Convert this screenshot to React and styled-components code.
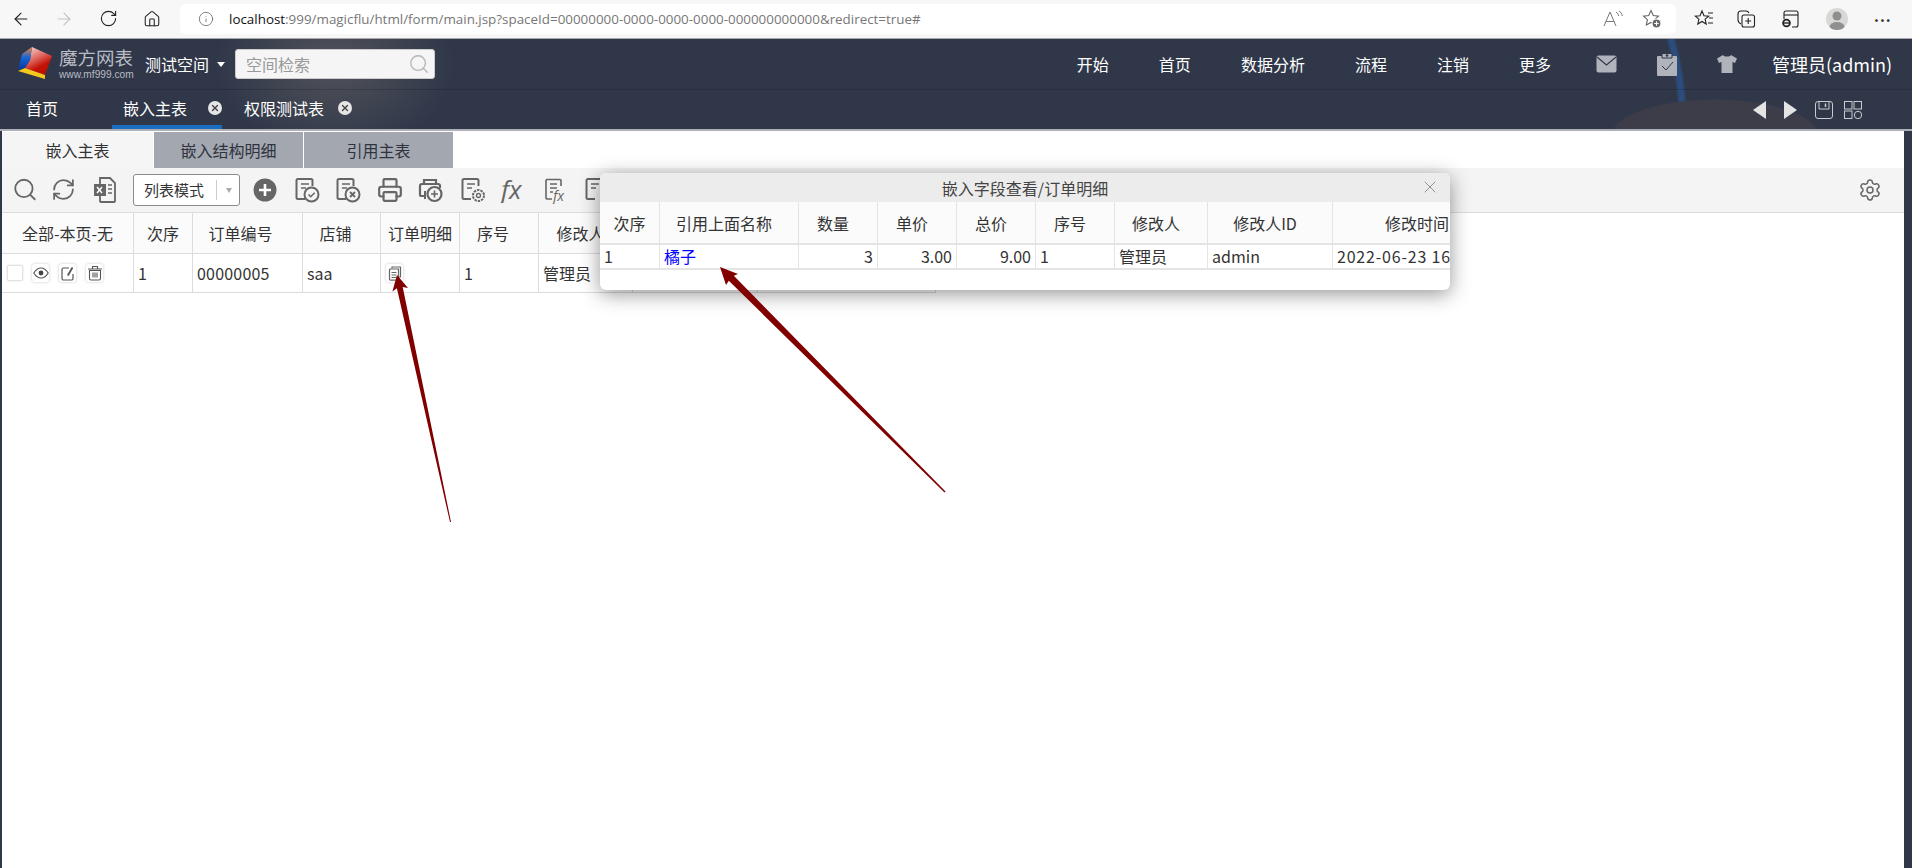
import styled, { createGlobalStyle } from 'styled-components';
import {
  ArrowLeft,
  ArrowRight,
  RotateCw,
  House,
  Info,
  Search,
  RefreshCw,
  Printer,
  Settings,
  X,
} from 'lucide-react';

const GlobalStyle = createGlobalStyle`
  html, body {
    margin: 0;
    padding: 0;
    height: 100%;
    background: #fff;
    font-family: "Noto Sans CJK SC", "Noto Sans", sans-serif;
    color: #333;
  }
  * {
    box-sizing: border-box;
  }
`;

const Page = styled.div`
  position: relative;
  width: 1912px;
  height: 868px;
  overflow: hidden;
  display: flex;
  flex-direction: column;
`;

/* browser chrome */
const BrowserBar = styled.div`
  height: 39px;
  flex: none;
  display: flex;
  align-items: center;
  padding-bottom: 1px;
  background: #f7f7f7;
  border-bottom: 1px solid #a9a9a9;
  color: #222;
`;

const BrowserBtn = styled.span`
  width: ${(p) => p.$w || 44}px;
  display: flex;
  justify-content: center;
  color: ${(p) => (p.$off ? '#c4c4c4' : '#222')};
`;

const AddressBar = styled.div`
  width: 1496px;
  height: 30px;
  margin-left: 6px;
  margin-right: 6px;
  padding: 0 14px 0 18px;
  background: #fff;
  border-radius: 6px;
  display: flex;
  align-items: center;
  font-family: "Open Sans", sans-serif;
  font-size: 13.4px;
  color: #777;
`;

const Url = styled.span`
  margin-left: 15px;
  flex: 1;
  white-space: nowrap;
  b {
    font-weight: 400;
    color: #111;
  }
`;

const AddrTools = styled.div`
  display: flex;
  align-items: center;
  gap: 17px;
  color: #666;
`;

const BrowserTools = styled.div`
  display: flex;
  align-items: center;
  flex: 1;
  gap: 23px;
  padding-left: 12px;
`;

const Avatar = styled.span`
  width: 22px;
  height: 22px;
  border-radius: 50%;
  background: #d8d8d6;
  overflow: hidden;
  display: block;
  margin-left: 3px;
`;

const Dots = styled.span`
  font-size: 15px;
  font-weight: 700;
  line-height: 1;
  letter-spacing: 1px;
  margin-left: 3px;
  margin-top: -6px;
  color: #333;
`;

/* app header */
const AppHeader = styled.header`
  flex: none;
  color: #fff;
  background:
    radial-gradient(ellipse 105px 37px at 1715px 97px, #3d3c49 97%, transparent 100%),
    radial-gradient(circle at -257.5px 83px, transparent 295px, #2c4c7c 298px, #2c4c7c 302px, transparent 305px) 1640px 0 / 80px 66px no-repeat,
    radial-gradient(ellipse 120px 90px at 335px 25px, rgba(128, 120, 112, 0.42), transparent 100%),
    #2f3749;
`;

const TopRow = styled.div`
  height: 51px;
  display: flex;
  align-items: center;
  padding: 0 20px 0 18px;
  border-bottom: 1px solid rgba(0, 0, 0, 0.16);
`;

const Logo = styled.div`
  display: flex;
  align-items: center;
  width: 127px;
  gap: 5px;
`;

const LogoText = styled.div`
  color: #b9bcc3;
  line-height: 1;
  strong {
    display: block;
    font-weight: 400;
    font-size: 18.5px;
    white-space: nowrap;
  }
  small {
    display: block;
    font-family: "Liberation Sans", sans-serif;
    font-size: 10.2px;
    margin-top: 4px;
    white-space: nowrap;
  }
`;

const SpaceName = styled.span`
  font-size: 16px;
  white-space: nowrap;
`;

const CaretDown = styled.span`
  width: 0;
  height: 0;
  margin: 0 8px;
  border-left: 4px solid transparent;
  border-right: 4px solid transparent;
  border-top: 5px solid #fff;
`;

const SearchBox = styled.div`
  width: 200px;
  height: 30px;
  margin-left: 2px;
  padding: 0 4px 0 10px;
  background: #f5f5f5;
  border-radius: 3px;
  border: 1px solid #ccc;
  display: flex;
  align-items: center;
  justify-content: space-between;
  font-size: 16px;
  color: #999;
`;

const NavList = styled.nav`
  margin-left: auto;
  display: flex;
  align-items: center;
  gap: 50px;
  font-size: 16px;
  white-space: nowrap;
`;

const NavIcons = styled.div`
  display: flex;
  align-items: center;
  gap: 40px;
  margin-left: -5px;
`;

const UserName = styled.span`
  font-size: 18px;
  margin-left: -15px;
`;

const TabRow = styled.div`
  height: 41px;
  display: flex;
  align-items: stretch;
  padding: 0 50px 0 26px;
  border-bottom: 2px solid #adb0b6;
`;

const HeadTab = styled.div`
  display: flex;
  align-items: center;
  gap: ${(p) => p.$gap || 0}px;
  font-size: 16px;
  white-space: nowrap;
  padding-left: ${(p) => p.$pad || 0}px;
  width: ${(p) => (p.$w ? `${p.$w}px` : 'auto')};
  border-bottom: 4px solid ${(p) => (p.$active ? '#1b6dc1' : 'transparent')};
`;

const CloseDot = styled.span`
  width: 14px;
  height: 14px;
  border-radius: 50%;
  background: #e6e6e6;
  color: #444;
  display: flex;
  align-items: center;
  justify-content: center;
`;

const WinTools = styled.div`
  margin-left: auto;
  display: flex;
  align-items: center;
  gap: 14px;
`;

const Triangle = styled.span`
  width: 0;
  height: 0;
  margin-right: 4px;
  border-top: 9px solid transparent;
  border-bottom: 9px solid transparent;
  ${(p) => (p.$left ? 'border-right: 13px solid #e4e4e4;' : 'border-left: 13px solid #e4e4e4;')}
`;

const FloppySlot = styled.span`
  display: flex;
  margin-right: -3px;
`;

/* content */
const Content = styled.main`
  position: relative;
  flex: 1;
  background: #fff;
  border-left: 2px solid #2f3749;
  border-right: 8px solid #2f3749;
  padding-top: 1px;
`;

const FormTabs = styled.div`
  display: flex;
  gap: 1px;
`;

const FormTab = styled.div`
  width: ${(p) => p.$w}px;
  height: 36px;
  display: flex;
  align-items: center;
  justify-content: center;
  font-size: 16px;
  background: ${(p) => (p.$active ? '#f5f5f5' : '#a3a7b0')};
  color: ${(p) => (p.$active ? '#333' : '#2f3340')};
`;

const Toolbar = styled.div`
  height: 45px;
  display: flex;
  align-items: center;
  padding: 0 22px 1px 10px;
  background: #f4f4f4;
  border-bottom: 1px solid #dcdcdc;
  color: #666;
`;

const ToolIcon = styled.span`
  width: ${(p) => p.$w || 41.5}px;
  flex: none;
  display: flex;
  justify-content: center;
`;

const ModeSelect = styled.div`
  position: relative;
  width: 107px;
  height: 32px;
  flex: none;
  margin: 0 3px 0 11px;
  padding-left: 10px;
  background: #fff;
  border: 1px solid #8c8c8c;
  border-radius: 3px;
  display: flex;
  align-items: center;
  font-size: 15px;
  white-space: nowrap;
  color: #333;
  &::before {
    content: '';
    position: absolute;
    right: 22px;
    top: 5px;
    height: 20px;
    border-left: 1px solid #ccc;
  }
  &::after {
    content: '';
    position: absolute;
    right: 7px;
    top: 13px;
    border-left: 3.5px solid transparent;
    border-right: 3.5px solid transparent;
    border-top: 5px solid #aaa;
  }
`;

const GearSlot = styled.span`
  margin-left: auto;
  display: flex;
`;

const Table = styled.div`
  display: grid;
  grid-template-columns: ${(p) => p.$cols};
  grid-auto-rows: ${(p) => p.$rows};
  width: ${(p) => p.$width}px;
  font-size: 16px;
  overflow: hidden;
`;

const HeadCell = styled.div`
  display: flex;
  align-items: center;
  justify-content: center;
  white-space: nowrap;
  overflow: hidden;
  background: #fbfbfb;
  border-right: 1px solid ${(p) => p.$line || '#dcdcdc'};
  border-bottom: ${(p) => p.$under || 1}px solid ${(p) => p.$line || '#dcdcdc'};
  padding-right: ${(p) => p.$shift || 0}px;
`;

const Cell = styled.div`
  display: flex;
  align-items: center;
  white-space: nowrap;
  overflow: hidden;
  padding: 0 4px ${(p) => p.$lift || 0}px;
  letter-spacing: ${(p) => p.$track || 0}px;
  justify-content: ${(p) => (p.$right ? 'flex-end' : 'flex-start')};
  border-right: 1px solid ${(p) => p.$line || '#dcdcdc'};
  border-bottom: ${(p) => p.$under || 1}px solid ${(p) => p.$line || '#dcdcdc'};
`;

const ModalCell = styled(Cell).attrs({ $line: '#e4e4e4', $under: 2, $lift: 2 })``;

const CheckBox = styled.span`
  width: 16px;
  height: 16px;
  margin-left: 1px;
  margin-right: 8px;
  border: 1px solid #e2e2e2;
  border-radius: 2px;
  box-shadow: 0 0 2px rgba(0, 0, 0, 0.15);
  background: #fff;
  flex: none;
`;

const RowBtn = styled.span`
  width: 19px;
  height: 20px;
  flex: none;
  margin-right: 8px;
  border: 1px solid #ececec;
  border-radius: 4px;
  box-shadow: 0 0 2px rgba(0, 0, 0, 0.12);
  display: flex;
  align-items: center;
  justify-content: center;
  color: #555;
`;

const Modal = styled.section`
  position: absolute;
  left: 598px;
  top: 42px;
  width: 850px;
  height: 117px;
  background: #fff;
  border-radius: 6px;
  overflow: hidden;
  box-shadow: 0 4px 20px rgba(0, 0, 0, 0.42);
`;

const ModalTitle = styled.div`
  position: relative;
  height: 29px;
  display: flex;
  align-items: center;
  justify-content: center;
  background: #ececec;
  font-size: 16px;
  color: #444;
  svg {
    position: absolute;
    right: 10px;
    top: 4px;
    color: #888;
  }
`;

const BlueLink = styled.a`
  color: #0000ff;
`;

const Arrows = styled.svg`
  position: absolute;
  left: 0;
  top: 0;
  pointer-events: none;
`;

const DocBase = ({ children }) => (
  <svg width="28" height="28" viewBox="0 0 28 28" fill="none" stroke="currentColor" strokeWidth="2">
    <path d="M12 23H5a1.5 1.5 0 0 1-1.5-1.5v-17A1.5 1.5 0 0 1 5 3h13a1.5 1.5 0 0 1 1.5 1.5V10" />
    <path d="M8 8h8M8 12h5" strokeWidth="1.4" />
    {children}
  </svg>
);

const DocCheck = () => (
  <DocBase>
    <circle cx="18.5" cy="18.5" r="7" fill="#f4f4f4" />
    <path d="M15.5 18.5l2.2 2.2 4-4" strokeWidth="1.6" />
  </DocBase>
);

const DocCross = () => (
  <DocBase>
    <circle cx="18.5" cy="18.5" r="7" fill="#f4f4f4" />
    <path d="M16 16l5 5M21 16l-5 5" strokeWidth="1.8" />
  </DocBase>
);

const DocGear = () => (
  <DocBase>
    <circle cx="19.5" cy="19.5" r="5.5" fill="#f4f4f4" strokeWidth="2" strokeDasharray="2.4 1" />
    <circle cx="19.5" cy="19.5" r="2" strokeWidth="1.3" />
  </DocBase>
);

const DocFx = () => (
  <svg width="28" height="28" viewBox="0 0 28 28" fill="none" stroke="currentColor" strokeWidth="1.6">
    <path d="M10 23H5a1 1 0 0 1-1-1V4.5a1 1 0 0 1 1-1h13a1 1 0 0 1 1 1V10" />
    <path d="M8 8h7M8 12h7M8 16h3" strokeWidth="1.3" />
    <text x="11" y="25" fontFamily="Open Sans, sans-serif" fontStyle="italic" fontSize="14" fill="currentColor" stroke="none">fx</text>
  </svg>
);

const PrintPlus = () => (
  <svg width="28" height="28" viewBox="0 0 28 28" fill="none" stroke="currentColor" strokeWidth="2.2">
    <path d="M7 8V4h12v4" />
    <path d="M8 20H4.5a1.5 1.5 0 0 1-1.5-1.5V10A2 2 0 0 1 5 8h16a2 2 0 0 1 2 2v2" />
    <path d="M8 15v8" strokeWidth="2" />
    <circle cx="17.5" cy="18" r="7" fill="#f4f4f4" />
    <path d="M17.5 14.5v7M14 18h7" strokeWidth="1.7" />
  </svg>
);

const ExcelDoc = () => (
  <svg width="24" height="28" viewBox="0 0 24 28" fill="none">
    <path d="M7 2h10l5 5v18a1 1 0 0 1-1 1H8a1 1 0 0 1-1-1z" stroke="#666" strokeWidth="1.8" />
    <path d="M15 9h4M15 13h4M15 17h4" stroke="#666" strokeWidth="1.3" />
    <rect x="1" y="8" width="12" height="12" fill="#666" />
    <path d="M4 11l5 6M9 11l-5 6" stroke="#fff" strokeWidth="1.5" />
  </svg>
);

const PlusDisc = () => (
  <svg width="24" height="24" viewBox="0 0 24 24">
    <circle cx="12" cy="12" r="11.5" fill="#666" />
    <path d="M12 6v12M6 12h12" stroke="#fff" strokeWidth="2.6" />
  </svg>
);

const CopyGlyph = () => (
  <svg width="14" height="15" viewBox="0 0 14 15" fill="none" stroke="#666" strokeWidth="1.2">
    <path d="M4 2.5V1h8.5v10H11" />
    <path d="M1.5 4a1 1 0 0 1 1-1h8v10.5a.7.7 0 0 1-.7.7H2.5a1 1 0 0 1-1-1z" />
    <path d="M3.5 6.5h5M3.5 9h5M3.5 11.5h5" strokeWidth="1" />
  </svg>
);

const EyeGlyph = () => (
  <svg width="16" height="12" viewBox="0 0 16 12" fill="none" stroke="#555" strokeWidth="1.1">
    <path d="M.8 6C3 2.5 5.3 1 8 1s5 1.5 7.2 5c-2.2 3.5-4.5 5-7.2 5S3 9.5.8 6z" />
    <circle cx="8" cy="6" r="2.4" fill="#444" stroke="none" />
  </svg>
);

const EditGlyph = () => (
  <svg width="14" height="15" viewBox="0 0 14 15" fill="none" stroke="#555" strokeWidth="1.2">
    <path d="M8 2H2.5A1.5 1.5 0 0 0 1 3.5v9A1.5 1.5 0 0 0 2.5 14h8a1.5 1.5 0 0 0 1.5-1.5V8" />
    <path d="M11.5 1.5L6.8 9.5" strokeWidth="1.8" />
  </svg>
);

const TrashGlyph = () => (
  <svg width="16" height="16" viewBox="0 0 16 16" fill="none" stroke="#555" strokeWidth="1.1">
    <path d="M1 4h14M5.5 3.5v-2h5v2" />
    <path d="M2.5 5.5h11v8a1.5 1.5 0 0 1-1.5 1.5H4a1.5 1.5 0 0 1-1.5-1.500z" />
    <path d="M6 7.5v5M8 7.5v5M10 7.5v5" />
  </svg>
);

const CubeLogo = () => (
  <svg width="36" height="34" viewBox="0 0 36 34">
    <defs>
      <linearGradient id="cubeFace" x1="0.2" y1="0" x2="0.7" y2="1">
        <stop offset="0" stopColor="#f4d0cc" />
        <stop offset="0.45" stopColor="#dc5a52" />
        <stop offset="0.7" stopColor="#c31306" />
        <stop offset="1" stopColor="#b80f04" />
      </linearGradient>
      <linearGradient id="cubeSide" x1="0" y1="0" x2="0" y2="1">
        <stop offset="0" stopColor="#f0863a" />
        <stop offset="0.45" stopColor="#1766d8" />
        <stop offset="1" stopColor="#08349a" />
      </linearGradient>
    </defs>
    <path d="M14 0L34 9 27 28 7 21 12 13z" fill="url(#cubeFace)" />
    <path d="M14 0L12 13 7 21 0 23 4 7z" fill="url(#cubeSide)" />
    <path d="M0 24L7 21 27 28 27 32z" fill="#f4c81c" />
  </svg>
);

const MailGlyph = () => (
  <svg width="21" height="18" viewBox="0 0 21 18">
    <rect x="0.5" y="0.5" width="20" height="17" rx="2" fill="#b1b3bb" />
    <path d="M1 2l9.5 8L20 2" fill="none" stroke="#2f3749" strokeWidth="1.1" />
  </svg>
);

const ClipboardGlyph = () => (
  <svg width="20" height="24" viewBox="0 0 20 24">
    <path d="M1 4h18a1 1 0 0 1 1 1v18a1 1 0 0 1-1 1H1a1 1 0 0 1-1-1V5a1 1 0 0 1 1-1z" fill="#b1b3bb" />
    <path d="M5 1.5h10V6H5z" fill="#b1b3bb" stroke="#2f3749" strokeWidth="1" />
    <circle cx="10" cy="3.5" r="1.3" fill="#2f3749" />
    <path d="M5 14l4 4 7-8" fill="none" stroke="#2f3749" strokeWidth="1" />
  </svg>
);

const ShirtGlyph = () => (
  <svg width="20" height="18" viewBox="0 0 20 18">
    <path d="M6 0L0 3.5 2 8l2.5-1v11h11V7L18 8l2-4.500L14 0c-1 2-7 2-8 0z" fill="#b1b3bb" />
  </svg>
);

const FloppyGlyph = () => (
  <svg width="18" height="18" viewBox="0 0 18 18" fill="none" stroke="#c9cbd0" strokeWidth="1">
    <rect x="0.5" y="0.5" width="17" height="17" rx="2.5" />
    <path d="M4 0.5V8h10V0.5" />
    <path d="M10.5 2.5V6" strokeWidth="1.5" />
  </svg>
);

const AppsGlyph = () => (
  <svg width="18" height="18" viewBox="0 0 18 18" fill="none" stroke="#c9cbd0" strokeWidth="1">
    <rect x="0.5" y="0.5" width="7.5" height="7.5" />
    <rect x="10" y="0.5" width="7.5" height="7.5" />
    <rect x="0.5" y="10" width="7.5" height="7.5" />
    <circle cx="14" cy="14" r="3.7" />
  </svg>
);

const ReadAloud = () => (
  <svg width="22" height="18" viewBox="0 0 22 18" fill="none" stroke="#777" strokeWidth="1">
    <path d="M1 16L7 2l6 14M3 11.5h8" />
    <path d="M13 2c1.5 1 2.5 2.5 2.5 4M16 1c2 1.200 3.200 3 3.200 5" />
  </svg>
);

const StarPlus = () => (
  <svg width="20" height="20" viewBox="0 0 20 20" fill="none" stroke="#666" strokeWidth="1.1">
    <path d="M9 1.5l2.300 5 5.200.6-3.900 3.600 1 5.300L9 13.400 4.400 16l1-5.300L1.500 7.100l5.200-.6z" />
    <circle cx="14.5" cy="14.5" r="4.5" fill="#666" stroke="#fff" />
    <path d="M14.5 12.300v4.400M12.300 14.500h4.400" stroke="#fff" />
  </svg>
);

const FavList = () => (
  <svg width="20" height="20" viewBox="0 0 20 20" fill="none" stroke="#222" strokeWidth="1.1">
    <path d="M8 2l2 4.700 4.800.4-3.700 3.100 1.100 4.800L8 12.500 3.800 15l1.100-4.800L1.200 7.100 6 6.700z" />
    <path d="M14 4h5M15 9h4M14 14h5" />
  </svg>
);

const Collections = () => (
  <svg width="20" height="20" viewBox="0 0 20 20" fill="none" stroke="#222" strokeWidth="1.1">
    <path d="M4 15c-2-1-3-2.500-3-4V5a3 3 0 0 1 3-3h5c1.500 0 2.500 1 3 2" />
    <rect x="5" y="6" width="12.5" height="12" rx="2" />
    <path d="M11.200 9v6M8.200 12h6" />
  </svg>
);

const IeTab = () => (
  <svg width="20" height="20" viewBox="0 0 20 20" fill="none" stroke="#222" strokeWidth="1.1">
    <path d="M4 10V4a2 2 0 0 1 2-2h10a2 2 0 0 1 2 2v12a2 2 0 0 1-2 2h-4" />
    <path d="M4 6h14" />
    <circle cx="6.5" cy="14" r="3.4" strokeWidth="1.8" />
    <path d="M3.5 14h6" strokeWidth="1.4" />
  </svg>
);

const mainCols = '132px 59px 110px 78px 79px 79px 94px 125px 178px';
const mainHead = [
  ['全部-本页-无', 0],
  ['次序', 0],
  ['订单编号', 14],
  ['店铺', 12],
  ['订单明细', 0],
  ['序号', 12],
  ['修改人', 10],
  ['修改人ID', 10],
  ['修改时间', 10],
];

const modalCols = '60px 139px 79px 79px 79px 79px 93px 125px 179px';
const modalHead = ['次序', '引用上面名称', '数量', '单价', '总价', '序号', '修改人', '修改人ID', '修改时间'];

const App = () => {
  return (
    <Page>
      <GlobalStyle />
      <BrowserBar>
        <BrowserBtn $w={42}><ArrowLeft size={20} strokeWidth={1.4} /></BrowserBtn>
        <BrowserBtn $off><ArrowRight size={20} strokeWidth={1.4} /></BrowserBtn>
        <BrowserBtn><RotateCw size={19} strokeWidth={1.4} /></BrowserBtn>
        <BrowserBtn><House size={18} strokeWidth={1.4} /></BrowserBtn>
        <AddressBar>
          <Info size={16} strokeWidth={1.2} color="#666" />
          <Url>
            <b>localhost</b>:999/magicflu/html/form/main.jsp?spaceId=00000000-0000-0000-0000-000000000000&amp;redirect=true#
          </Url>
          <AddrTools>
            <ReadAloud />
            <StarPlus />
          </AddrTools>
        </AddressBar>
        <BrowserTools>
          <FavList />
          <Collections />
          <IeTab />
          <Avatar>
            <svg width="22" height="22" viewBox="0 0 22 22">
              <circle cx="11" cy="8" r="4.5" fill="#8f8f8d" />
              <ellipse cx="11" cy="19" rx="7.5" ry="5" fill="#8f8f8d" />
            </svg>
          </Avatar>
          <Dots>...</Dots>
        </BrowserTools>
      </BrowserBar>

      <AppHeader>
        <TopRow>
          <Logo>
            <CubeLogo />
            <LogoText>
              <strong>魔方网表</strong>
              <small>www.mf999.com</small>
            </LogoText>
          </Logo>
          <SpaceName>测试空间</SpaceName>
          <CaretDown />
          <SearchBox>
            空间检索
            <Search size={22} color="#b5b5b5" strokeWidth={1.5} />
          </SearchBox>
          <NavList>
            <span>开始</span>
            <span>首页</span>
            <span>数据分析</span>
            <span>流程</span>
            <span>注销</span>
            <span>更多</span>
            <NavIcons>
              <MailGlyph />
              <ClipboardGlyph />
              <ShirtGlyph />
            </NavIcons>
            <UserName>管理员(admin)</UserName>
          </NavList>
        </TopRow>
        <TabRow>
          <HeadTab $w={86}>首页</HeadTab>
          <HeadTab $active $w={110} $pad={11} $gap={21}>
            嵌入主表
            <CloseDot><X size={10} strokeWidth={3.2} /></CloseDot>
          </HeadTab>
          <HeadTab $pad={22} $gap={14}>
            权限测试表
            <CloseDot><X size={10} strokeWidth={3.2} /></CloseDot>
          </HeadTab>
          <WinTools>
            <Triangle $left />
            <Triangle />
            <FloppySlot><FloppyGlyph /></FloppySlot>
            <AppsGlyph />
          </WinTools>
        </TabRow>
      </AppHeader>

      <Content>
        <FormTabs>
          <FormTab $active $w={151}>嵌入主表</FormTab>
          <FormTab $w={149}>嵌入结构明细</FormTab>
          <FormTab $w={149}>引用主表</FormTab>
        </FormTabs>
        <Toolbar>
          <ToolIcon $w={26}><Search size={29} strokeWidth={1.7} /></ToolIcon>
          <ToolIcon $w={50}><RefreshCw size={25} strokeWidth={1.7} /></ToolIcon>
          <ToolIcon $w={34}><ExcelDoc /></ToolIcon>
          <ModeSelect>列表模式</ModeSelect>
          <ToolIcon $w={43}><PlusDisc /></ToolIcon>
          <ToolIcon><DocCheck /></ToolIcon>
          <ToolIcon><DocCross /></ToolIcon>
          <ToolIcon><Printer size={26} strokeWidth={2} /></ToolIcon>
          <ToolIcon><PrintPlus /></ToolIcon>
          <ToolIcon><DocGear /></ToolIcon>
          <ToolIcon>
            <svg width="28" height="26" viewBox="0 0 28 26">
              <text x="1" y="22" fontFamily="Open Sans, sans-serif" fontStyle="italic" fontSize="26" fill="#666">fx</text>
            </svg>
          </ToolIcon>
          <ToolIcon><DocFx /></ToolIcon>
          <ToolIcon><DocBase /></ToolIcon>
          <GearSlot><Settings size={24} strokeWidth={1.5} /></GearSlot>
        </Toolbar>
        <Table $cols={mainCols} $rows="41px 39px" $width={934}>
          {mainHead.map(([name, shift]) => (
            <HeadCell key={name} $shift={shift}>{name}</HeadCell>
          ))}
          <Cell>
            <CheckBox />
            <RowBtn><EyeGlyph /></RowBtn>
            <RowBtn><EditGlyph /></RowBtn>
            <RowBtn><TrashGlyph /></RowBtn>
          </Cell>
          <Cell>1</Cell>
          <Cell $track={0.2}>00000005</Cell>
          <Cell>saa</Cell>
          <Cell><RowBtn><CopyGlyph /></RowBtn></Cell>
          <Cell>1</Cell>
          <Cell>管理员</Cell>
          <Cell>admin</Cell>
          <Cell>2022-06-23 16:00:00</Cell>
        </Table>

        <Modal>
          <ModalTitle>
            嵌入字段查看/订单明细
            <X size={20} strokeWidth={1.1} />
          </ModalTitle>
          <Table $cols={modalCols} $rows="43px 25px" $width={850}>
            {modalHead.map((name, i) => (
              <HeadCell key={name} $line="#e4e4e4" $under={2} $shift={i === 0 ? 0 : 10}>{name}</HeadCell>
            ))}
            <ModalCell>1</ModalCell>
            <ModalCell><BlueLink>橘子</BlueLink></ModalCell>
            <ModalCell $right>3</ModalCell>
            <ModalCell $right>3.00</ModalCell>
            <ModalCell $right>9.00</ModalCell>
            <ModalCell>1</ModalCell>
            <ModalCell>管理员</ModalCell>
            <ModalCell>admin</ModalCell>
            <ModalCell $track={0.8}>2022-06-23 16:00:00</ModalCell>
          </Table>
        </Modal>
      </Content>

      <Arrows width="1912" height="868" viewBox="0 0 1912 868">
        <polygon
          fill="#800000"
          points="397,275 408,288 402.7,287 451,522 450,522 396.9,288.3 392.4,291.4"
        />
        <polygon
          fill="#800000"
          points="720,267 738,274 733.8,275.8 945.5,491.5 944.5,492.5 728.8,280.8 726,285"
        />
      </Arrows>
    </Page>
  );
};

export default App;
